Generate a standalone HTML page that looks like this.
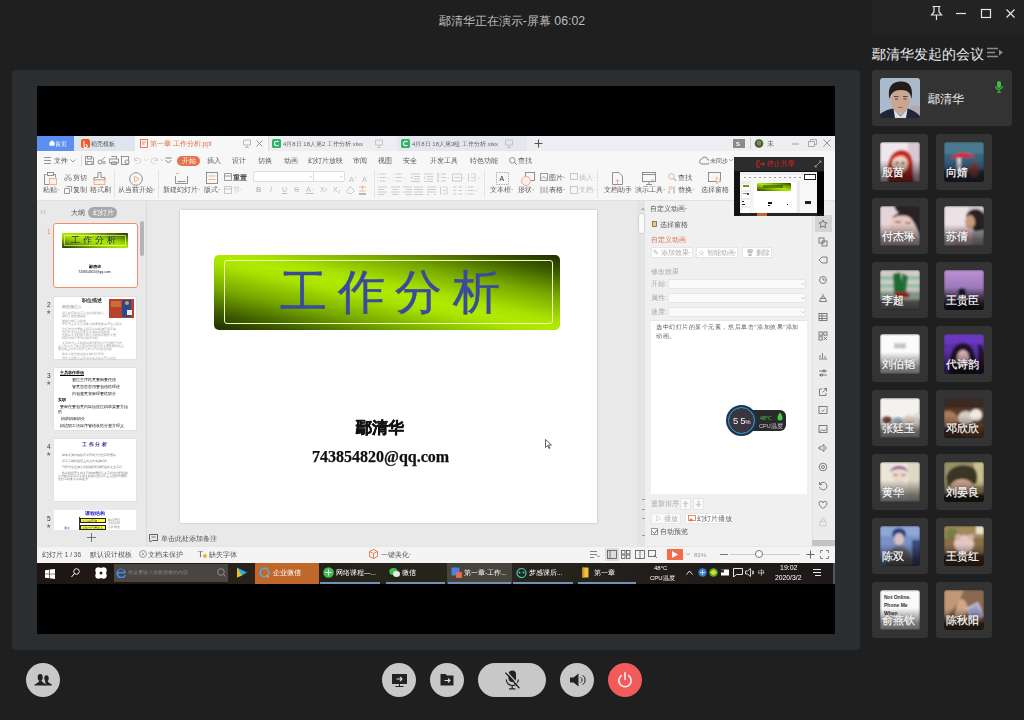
<!DOCTYPE html>
<html><head><meta charset="utf-8">
<style>
*{margin:0;padding:0;box-sizing:border-box}
html,body{width:1024px;height:720px;overflow:hidden;background:#1f1f1f;font-family:"Liberation Sans",sans-serif;position:relative}
.a{position:absolute}
.t{white-space:nowrap}
#title{left:0;top:12px;width:1024px;text-align:center;color:#bdbdbd;font-size:12.3px;line-height:18px}
#panel{left:12px;top:70px;width:848px;height:580px;background:#2b2e31;border-radius:4px}
#screen{left:37px;top:86px;width:798px;height:548px;background:#000}
#wps{left:37px;top:136px;width:798px;height:448px;background:#fff;overflow:hidden;filter:blur(0.35px)}
.tile{width:56px;height:56px;background:#333;border-radius:3px}
.av{left:8px;top:8px;width:40px;height:40px;border-radius:3px;overflow:hidden}
.nm{left:1.5px;bottom:3px;color:#fff;font-size:11.2px;line-height:13px;white-space:nowrap;text-shadow:0 0 2px rgba(0,0,0,.6);-webkit-text-stroke:0.2px #fff}
.btn{width:34px;height:34px;border-radius:17px;background:#c8c8c8}
.sh{left:0;bottom:0;width:40px;height:22px;background:linear-gradient(rgba(0,0,0,0),rgba(0,0,0,.5) 70%,rgba(0,0,0,.6))}
</style></head><body>
<div id="title" class="a">鄢清华正在演示-屏幕 06:02</div>
<div id="panel" class="a"></div>
<div id="screen" class="a"></div>
<div id="wps" class="a">
<div class="a" style="left:0px;top:0px;width:798px;height:15px;background:#eceef2"></div>
<div class="a" style="left:0px;top:0px;width:37px;height:15px;background:#5d8ff2"></div>
<svg class="a" style="left:12px;top:4px" width="6" height="6" viewBox="0 0 6 6"><path d="M0.5 2.5L3 0.3 5.5 2.5v3.2h-5z" fill="#fff"/></svg>
<div class="a t" style="left:18px;top:2.5px;font-size:5.5px;line-height:10px;color:#fff;">首页</div>
<div class="a" style="left:37px;top:0px;width:61px;height:15px;background:#dfe5ee"></div>
<svg class="a" style="left:44px;top:3px" width="9" height="9" viewBox="0 0 9 9"><rect width="9" height="9" rx="2" fill="#f05a28"/><path d="M3 2v5.2a1.6 1.6 0 1 0 1.6-1.6" stroke="#fff" stroke-width="1.1" fill="none"/></svg>
<div class="a t" style="left:54px;top:2.5px;font-size:6px;line-height:10px;color:#555;">稻壳模板</div>
<div class="a" style="left:98px;top:0px;width:133px;height:15px;background:#f7f7f7"></div>
<svg class="a" style="left:103px;top:3px" width="8" height="9" viewBox="0 0 8 9"><rect x="0.5" y="0.5" width="7" height="8" fill="none" stroke="#e07048" stroke-width="0.9"/><path d="M2 3h4M2 5h2.5" stroke="#e07048" stroke-width="0.8"/></svg>
<div class="a t" style="left:113px;top:2.5px;font-size:6.5px;line-height:10px;color:#e07048;">第一章 工作分析.ppt</div>
<svg class="a" style="left:206px;top:3px" width="8" height="9" viewBox="0 0 8 9"><path d="M0.5 1h7v5h-7zM4 6v2M2 8.5h4" stroke="#aaa" fill="none" stroke-width="0.8"/></svg>
<svg class="a" style="left:219px;top:4px" width="7" height="7" viewBox="0 0 7 7"><path d="M0.5 0.5l6 6M6.5 0.5l-6 6" stroke="#888" stroke-width="0.9"/></svg>
<div class="a" style="left:231px;top:0px;width:1px;height:15px;background:#dcdfe4"></div>
<svg class="a" style="left:235px;top:3px" width="9" height="9" viewBox="0 0 9 9"><rect width="9" height="9" rx="1.5" fill="#2fb36a"/><path d="M6.5 3a2.3 2.3 0 1 0 0 3" stroke="#fff" stroke-width="1.1" fill="none"/></svg>
<div class="a t" style="left:246px;top:2.5px;font-size:6px;line-height:10px;color:#666;">4月8日 18人第2 工作分析.xlsx</div>
<svg class="a" style="left:338px;top:3px" width="8" height="9" viewBox="0 0 8 9"><path d="M0.5 1h7v5h-7zM4 6v2M2 8.5h4" stroke="#bbb" fill="none" stroke-width="0.8"/></svg>
<div class="a" style="left:360px;top:0px;width:130px;height:15px;background:#e4e8ee"></div>
<svg class="a" style="left:364px;top:3px" width="9" height="9" viewBox="0 0 9 9"><rect width="9" height="9" rx="1.5" fill="#2fb36a"/><path d="M6.5 3a2.3 2.3 0 1 0 0 3" stroke="#fff" stroke-width="1.1" fill="none"/></svg>
<div class="a t" style="left:375px;top:2.5px;font-size:6px;line-height:10px;color:#666;">4月8日 18人第3组 工作分析.xlsx</div>
<svg class="a" style="left:468px;top:3px" width="8" height="9" viewBox="0 0 8 9"><path d="M0.5 1h7v5h-7zM4 6v2M2 8.5h4" stroke="#bbb" fill="none" stroke-width="0.8"/></svg>
<svg class="a" style="left:497px;top:3px" width="9" height="9" viewBox="0 0 9 9"><path d="M4.5 0.5v8M0.5 4.5h8" stroke="#555" stroke-width="1.1"/></svg>
<div class="a" style="left:696px;top:3px;width:12px;height:9px;background:#8a8a8a"></div>
<div class="a t" style="left:699px;top:2.5px;font-size:6px;line-height:10px;color:#fff;font-weight:bold">S</div>
<div class="a" style="left:713px;top:2px;width:1px;height:11px;background:#d0d0d0"></div>
<svg class="a" style="left:717px;top:3px" width="10" height="9" viewBox="0 0 10 9"><circle cx="5" cy="4.5" r="4.3" fill="#4a5a2a"/><circle cx="5" cy="4" r="2.5" fill="#7a8a50"/></svg>
<div class="a t" style="left:730px;top:2.5px;font-size:6.5px;line-height:10px;color:#666;">未</div>
<svg class="a" style="left:755px;top:7px" width="8" height="2" viewBox="0 0 8 2"><path d="M0 1h7" stroke="#999" stroke-width="0.9"/></svg>
<svg class="a" style="left:771px;top:3px" width="9" height="8" viewBox="0 0 9 8"><path d="M2.5 2.5V0.5h6v5h-2M0.5 2.5h6v5h-6z" stroke="#999" stroke-width="0.8" fill="none"/></svg>
<svg class="a" style="left:786px;top:3px" width="8" height="8" viewBox="0 0 8 8"><path d="M0.5 0.5l7 7M7.5 0.5l-7 7" stroke="#888" stroke-width="0.9"/></svg>
<div class="a" style="left:0px;top:15px;width:798px;height:49px;background:#f7f7f7"></div>
<svg class="a" style="left:7px;top:21px" width="8" height="7" viewBox="0 0 8 7"><path d="M0 0.5h7M0 3.5h7M0 6.5h7" stroke="#7a7a7a" stroke-width="0.8"/></svg>
<div class="a t" style="left:17px;top:20.0px;font-size:6.5px;line-height:10px;color:#555;">文件</div>
<svg class="a" style="left:33px;top:23px" width="6" height="4" viewBox="0 0 6 4"><path d="M0.5 0.5l2.5 2.5 2.5-2.5" stroke="#888" stroke-width="0.8" fill="none"/></svg>
<div class="a" style="left:44px;top:19px;width:1px;height:11px;background:#ddd"></div>
<svg class="a" style="left:48px;top:20px" width="9" height="9" viewBox="0 0 9 9"><path d="M0.5 0.5h6.5l1.5 1.5v6.5h-8z M2.5 0.5v2.5h4V0.5 M2 8.5V5.5h5v3" stroke="#7a7a7a" stroke-width="0.8" fill="none"/></svg>
<svg class="a" style="left:60px;top:20px" width="9" height="9" viewBox="0 0 9 9"><circle cx="3" cy="6" r="2" stroke="#7a7a7a" stroke-width="0.8" fill="none"/><path d="M4.5 4.5l3.5-3.5" stroke="#7a7a7a" stroke-width="0.8"/><circle cx="7" cy="6.5" r="1.2" stroke="#7a7a7a" stroke-width="0.8" fill="none"/></svg>
<svg class="a" style="left:72px;top:20px" width="10" height="9" viewBox="0 0 10 9"><path d="M2.5 0.5h5v2.5M0.5 3h9v4h-9z M2.5 6h5v2.5h-5z" stroke="#7a7a7a" stroke-width="0.8" fill="none"/></svg>
<svg class="a" style="left:84px;top:20px" width="9" height="9" viewBox="0 0 9 9"><rect x="0.5" y="0.5" width="7" height="8" stroke="#7a7a7a" stroke-width="0.8" fill="none"/><circle cx="6" cy="6" r="2" stroke="#7a7a7a" stroke-width="0.8" fill="#f7f7f7"/></svg>
<svg class="a" style="left:97px;top:21px" width="8" height="7" viewBox="0 0 8 7"><path d="M1 3a3 3 0 1 1 1 3.5M0.5 0.5v3h3" stroke="#c8c8c8" stroke-width="0.8" fill="none"/></svg>
<svg class="a" style="left:107px;top:23px" width="4" height="3" viewBox="0 0 4 3"><path d="M0 0l2 2 2-2" stroke="#ccc" stroke-width="0.7" fill="none"/></svg>
<svg class="a" style="left:113px;top:21px" width="8" height="7" viewBox="0 0 8 7"><path d="M7 3a3 3 0 1 0 -1 3.5M7.5 0.5v3h-3" stroke="#c8c8c8" stroke-width="0.8" fill="none"/></svg>
<svg class="a" style="left:123px;top:23px" width="4" height="3" viewBox="0 0 4 3"><path d="M0 0l2 2 2-2" stroke="#ccc" stroke-width="0.7" fill="none"/></svg>
<svg class="a" style="left:128px;top:21px" width="7" height="7" viewBox="0 0 7 7"><path d="M0.5 1h6M0.5 3l3 3 3-3" stroke="#666" stroke-width="0.8" fill="none"/></svg>
<div class="a" style="left:140px;top:20px;width:23px;height:10px;background:#e8714b;border-radius:5px"></div>
<div class="a t" style="left:145px;top:20.0px;font-size:6.5px;line-height:10px;color:#fff;">开始</div>
<div class="a t" style="left:170px;top:20.0px;font-size:6.5px;line-height:10px;color:#5a5a5a;">插入</div>
<div class="a t" style="left:195px;top:20.0px;font-size:6.5px;line-height:10px;color:#5a5a5a;">设计</div>
<div class="a t" style="left:221px;top:20.0px;font-size:6.5px;line-height:10px;color:#5a5a5a;">切换</div>
<div class="a t" style="left:247px;top:20.0px;font-size:6.5px;line-height:10px;color:#5a5a5a;">动画</div>
<div class="a t" style="left:271px;top:20.0px;font-size:6.5px;line-height:10px;color:#5a5a5a;">幻灯片放映</div>
<div class="a t" style="left:316px;top:20.0px;font-size:6.5px;line-height:10px;color:#5a5a5a;">审阅</div>
<div class="a t" style="left:341px;top:20.0px;font-size:6.5px;line-height:10px;color:#5a5a5a;">视图</div>
<div class="a t" style="left:366px;top:20.0px;font-size:6.5px;line-height:10px;color:#5a5a5a;">安全</div>
<div class="a t" style="left:393px;top:20.0px;font-size:6.5px;line-height:10px;color:#5a5a5a;">开发工具</div>
<div class="a t" style="left:433px;top:20.0px;font-size:6.5px;line-height:10px;color:#5a5a5a;">特色功能</div>
<svg class="a" style="left:472px;top:21px" width="8" height="8" viewBox="0 0 8 8"><circle cx="3.3" cy="3.3" r="2.8" stroke="#7a7a7a" stroke-width="0.8" fill="none"/><path d="M5.3 5.3l2.3 2.3" stroke="#7a7a7a" stroke-width="1"/></svg>
<div class="a t" style="left:481px;top:20.0px;font-size:6.5px;line-height:10px;color:#555;">查找</div>
<svg class="a" style="left:662px;top:20px" width="10" height="9" viewBox="0 0 10 9"><path d="M2.5 8h6a2.2 2.2 0 0 0 0-4.4 3 3 0 0 0-5.8-.5A2.5 2.5 0 0 0 2.5 8z" stroke="#666" stroke-width="0.8" fill="none"/></svg>
<div class="a t" style="left:673px;top:20.0px;font-size:6px;line-height:10px;color:#5c5c5c;">未同步</div>
<svg class="a" style="left:692px;top:23px" width="4" height="3" viewBox="0 0 4 3"><path d="M0 0l2 2 2-2" stroke="#888" stroke-width="0.7" fill="none"/></svg>
<div class="a" style="left:0px;top:64px;width:798px;height:1px;background:#e0e0e0"></div>
<svg class="a" style="left:7px;top:36px" width="13" height="13" viewBox="0 0 13 13"><path d="M2.5 2.5h-2v10h5" stroke="#858585" stroke-width="0.9" fill="none"/><rect x="3.5" y="0.5" width="6" height="3" stroke="#858585" stroke-width="0.9" fill="none"/><path d="M9.5 2.5h2v3" stroke="#858585" stroke-width="0.9" fill="none"/><rect x="5.5" y="6.5" width="7" height="6" fill="#fcefe8" stroke="#eea888" stroke-width="0.9"/></svg>
<div class="a t" style="left:6px;top:49.0px;font-size:6.5px;line-height:10px;color:#5c5c5c;">粘贴·</div>
<svg class="a" style="left:27px;top:38px" width="8" height="7" viewBox="0 0 8 7"><circle cx="1.8" cy="5.2" r="1.3" stroke="#858585" stroke-width="0.8" fill="none"/><circle cx="6.2" cy="5.2" r="1.3" stroke="#858585" stroke-width="0.8" fill="none"/><path d="M2.5 4l4-4M5.5 4l-4-4" stroke="#858585" stroke-width="0.8"/></svg>
<div class="a t" style="left:36px;top:36.5px;font-size:6.5px;line-height:10px;color:#5c5c5c;">剪切</div>
<svg class="a" style="left:27px;top:50px" width="8" height="8" viewBox="0 0 8 8"><path d="M2.5 0.5h5v5.5M0.5 2.5h5v5h-5z" stroke="#858585" stroke-width="0.8" fill="none"/></svg>
<div class="a t" style="left:36px;top:49.0px;font-size:6.5px;line-height:10px;color:#5c5c5c;">复制</div>
<svg class="a" style="left:56px;top:36px" width="13" height="13" viewBox="0 0 13 13"><path d="M5 0.5h3v5h4v2.5h-11V5.5h4z" stroke="#858585" stroke-width="0.9" fill="none"/><rect x="1" y="8" width="11" height="4.5" fill="#fcefe8" stroke="#eea888" stroke-width="0.9"/></svg>
<div class="a t" style="left:53px;top:49.0px;font-size:6.5px;line-height:10px;color:#5c5c5c;">格式刷</div>
<div class="a" style="left:77px;top:34px;width:1px;height:28px;background:#e4e4e4"></div>
<svg class="a" style="left:92px;top:36px" width="14" height="14" viewBox="0 0 14 14"><circle cx="7" cy="7" r="6.3" stroke="#858585" stroke-width="0.9" fill="none"/><path d="M5.5 4.2v5.6l4.5-2.8z" stroke="#eea888" stroke-width="0.9" fill="none"/></svg>
<div class="a t" style="left:81px;top:49.0px;font-size:6.5px;line-height:10px;color:#5c5c5c;">从当前开始·</div>
<div class="a" style="left:121px;top:34px;width:1px;height:28px;background:#e4e4e4"></div>
<svg class="a" style="left:138px;top:36px" width="13" height="12" viewBox="0 0 13 12"><path d="M0.5 4v7.5h12V4" stroke="#858585" stroke-width="0.9" fill="none"/><path d="M2.5 9.5h8" stroke="#858585" stroke-width="0.9"/><path d="M1 1.5h3" stroke="#eea888" stroke-width="0.9"/></svg>
<div class="a t" style="left:126px;top:49.0px;font-size:6.5px;line-height:10px;color:#5c5c5c;">新建幻灯片·</div>
<svg class="a" style="left:169px;top:36px" width="12" height="12" viewBox="0 0 12 12"><rect x="0.5" y="0.5" width="11" height="11" stroke="#858585" stroke-width="0.9" fill="none"/><path d="M2.5 4h7M2.5 7.5h7" stroke="#eea888" stroke-width="0.9"/></svg>
<div class="a t" style="left:167px;top:49.0px;font-size:6.5px;line-height:10px;color:#5c5c5c;">版式·</div>
<svg class="a" style="left:187px;top:37px" width="8" height="8" viewBox="0 0 8 8"><path d="M0.5 0.5h7v7h-7zM0.5 3h7" stroke="#858585" stroke-width="0.8" fill="none"/></svg>
<div class="a t" style="left:196px;top:36.5px;font-size:6.5px;line-height:10px;color:#444;font-weight:bold">重置</div>
<svg class="a" style="left:187px;top:50px" width="8" height="8" viewBox="0 0 8 8"><path d="M0.5 0.5h7v7h-7zM0.5 3h7" stroke="#bbb" stroke-width="0.8" fill="none"/></svg>
<div class="a t" style="left:196px;top:49.0px;font-size:6.5px;line-height:10px;color:#bbb;">节·</div>
<div class="a" style="left:216px;top:35px;width:61px;height:11px;background:#fff;border:1px solid #dedede;border-radius:2px 0 0 2px"></div>
<div class="a" style="left:276px;top:35px;width:32px;height:11px;background:#fff;border:1px solid #dedede;border-radius:0 2px 2px 0"></div>
<svg class="a" style="left:272px;top:40px" width="3" height="2" viewBox="0 0 3 2"><path d="M0 0l1.5 1.5 1.5-1.5" stroke="#bbb" stroke-width="0.6" fill="none"/></svg>
<svg class="a" style="left:303px;top:40px" width="3" height="2" viewBox="0 0 3 2"><path d="M0 0l1.5 1.5 1.5-1.5" stroke="#bbb" stroke-width="0.6" fill="none"/></svg>
<div class="a t" style="left:312px;top:36.0px;font-size:7.5px;line-height:10px;color:#bbb;">A<sup style='font-size:4px'>+</sup></div>
<div class="a t" style="left:325px;top:36.0px;font-size:7.5px;line-height:10px;color:#bbb;">A<sup style='font-size:4px'>-</sup></div>
<div class="a t" style="left:219px;top:49.0px;font-size:7.5px;line-height:10px;color:#bbb;font-weight:bold">B</div>
<div class="a t" style="left:233px;top:49.0px;font-size:7.5px;line-height:10px;color:#bbb;font-style:italic">I</div>
<div class="a t" style="left:245px;top:49.0px;font-size:7px;line-height:10px;color:#bbb;text-decoration:underline">U</div>
<div class="a t" style="left:257px;top:49.0px;font-size:7.5px;line-height:10px;color:#bbb;text-decoration:line-through">S</div>
<div class="a t" style="left:269px;top:49.0px;font-size:7.5px;line-height:10px;color:#bbb;text-decoration:underline">A·</div>
<div class="a t" style="left:283px;top:49.0px;font-size:7px;line-height:10px;color:#bbb;">X²</div>
<div class="a t" style="left:296px;top:49.0px;font-size:7px;line-height:10px;color:#bbb;">X₂</div>
<svg class="a" style="left:309px;top:50px" width="9" height="8" viewBox="0 0 9 8"><path d="M4.5 0.5l4 4-3 3h-3l-2-2z" stroke="#bbb" stroke-width="0.8" fill="none"/></svg>
<svg class="a" style="left:321px;top:49px" width="9" height="10" viewBox="0 0 9 10"><path d="M1 2h7M4.5 0.5v4M1.5 6h6" stroke="#eea888" stroke-width="0.9"/><path d="M1 9h7" stroke="#666" stroke-width="0.9"/></svg>
<div class="a" style="left:337px;top:34px;width:1px;height:28px;background:#e4e4e4"></div>
<svg class="a" style="left:340px;top:37px" width="13" height="9" viewBox="0 0 13 9"><g stroke="#c0c0c0" stroke-width="0.8" fill="none"><path d="M0 1h1M0 4.5h1M0 8h1M2.5 1h6M2.5 4.5h6M2.5 8h6"/><path d="M10 4.5l1 1 1-1" stroke-width="0.6"/></g></svg>
<svg class="a" style="left:356px;top:37px" width="13" height="9" viewBox="0 0 13 9"><g stroke="#c0c0c0" stroke-width="0.8" fill="none"><path d="M0 0.5v1.5M0 4v1.5M0 7.5V9M2.5 1h6M2.5 4.5h6M2.5 8h6"/><path d="M10 4.5l1 1 1-1" stroke-width="0.6"/></g></svg>
<svg class="a" style="left:374px;top:37px" width="12" height="9" viewBox="0 0 12 9"><g stroke="#c0c0c0" stroke-width="0.8" fill="none"><path d="M0 1h9M3 3.5h6M3 6h6M0 8.5h9M0 3.5l1.5 1.2L0 6"/></g></svg>
<svg class="a" style="left:387px;top:37px" width="12" height="9" viewBox="0 0 12 9"><g stroke="#c0c0c0" stroke-width="0.8" fill="none"><path d="M0 1h9M3 3.5h6M3 6h6M0 8.5h9M1.5 3.5L0 4.7l1.5 1.3"/></g></svg>
<svg class="a" style="left:400px;top:37px" width="13" height="9" viewBox="0 0 13 9"><g stroke="#c0c0c0" stroke-width="0.8" fill="none"><path d="M1 0.5v8M0 1.5l1-1 1 1M0 7.5l1 1 1-1M4 1h5M4 4.5h5M4 8h5"/><path d="M10 4.5l1 1 1-1" stroke-width="0.6"/></g></svg>
<svg class="a" style="left:415px;top:37px" width="13" height="9" viewBox="0 0 13 9"><g stroke="#c0c0c0" stroke-width="0.8" fill="none"><rect x="0.5" y="1" width="9" height="7"/><path d="M2.5 4.5h5"/><path d="M10 4.5l1 1 1-1" stroke-width="0.6"/></g></svg>
<svg class="a" style="left:431px;top:37px" width="13" height="9" viewBox="0 0 13 9"><g stroke="#c0c0c0" stroke-width="0.8" fill="none"><path d="M0.5 0.5v8M3 1h2.5M3 4.5h2.5M3 8h2.5M7 0.5v8"/><path d="M10 4.5l1 1 1-1" stroke-width="0.6"/></g></svg>
<svg class="a" style="left:341px;top:50px" width="12" height="9" viewBox="0 0 12 9"><g stroke="#c0c0c0" stroke-width="0.8" fill="none"><path d="M0 1h9M0 3.5h6M0 6h9M0 8.5h6"/></g></svg>
<svg class="a" style="left:354px;top:50px" width="12" height="9" viewBox="0 0 12 9"><g stroke="#c0c0c0" stroke-width="0.8" fill="none"><path d="M0 1h9M1.5 3.5h6M0 6h9M1.5 8.5h6"/></g></svg>
<svg class="a" style="left:366px;top:50px" width="12" height="9" viewBox="0 0 12 9"><g stroke="#c0c0c0" stroke-width="0.8" fill="none"><path d="M0 1h9M3 3.5h6M0 6h9M3 8.5h6"/></g></svg>
<svg class="a" style="left:377px;top:50px" width="12" height="9" viewBox="0 0 12 9"><g stroke="#c0c0c0" stroke-width="0.8" fill="none"><path d="M0 1h9M0 3.5h9M0 6h9M0 8.5h9"/></g></svg>
<svg class="a" style="left:390px;top:50px" width="12" height="9" viewBox="0 0 12 9"><g stroke="#c0c0c0" stroke-width="0.8" fill="none"><path d="M0 1h9M0 3.5h9M0 6h9M0 8.5h2M7 8.5h2"/></g></svg>
<svg class="a" style="left:403px;top:50px" width="12" height="9" viewBox="0 0 12 9"><g stroke="#c0c0c0" stroke-width="0.8" fill="none"><path d="M0.5 0.5v8M3 1h2.5M3 4.5h2.5M3 8h2.5M7 0.5v8"/></g></svg>
<svg class="a" style="left:416px;top:50px" width="12" height="9" viewBox="0 0 12 9"><g stroke="#c0c0c0" stroke-width="0.8" fill="none"><path d="M0 1h3.5M5.5 1H9M0 4.5h3.5M5.5 4.5H9M0 8h3.5M5.5 8H9"/></g></svg>
<svg class="a" style="left:428px;top:50px" width="13" height="9" viewBox="0 0 13 9"><g stroke="#c0c0c0" stroke-width="0.8" fill="none"><path d="M0 1h1M0 4.5h1M0 8h1M2.5 1h6M2.5 4.5h6M2.5 8h6"/><path d="M10 4.5l1 1 1-1" stroke-width="0.6"/></g></svg>
<div class="a" style="left:447px;top:34px;width:1px;height:28px;background:#e4e4e4"></div>
<svg class="a" style="left:459px;top:36px" width="13" height="13" viewBox="0 0 13 13"><rect x="0.5" y="0.5" width="12" height="12" stroke="#999" stroke-width="0.8" stroke-dasharray="1.5 1" fill="none"/><text x="3.5" y="9" font-size="7" fill="#333" font-family="Liberation Sans">A</text></svg>
<div class="a t" style="left:453px;top:49.0px;font-size:6.5px;line-height:10px;color:#5c5c5c;">文本框·</div>
<svg class="a" style="left:484px;top:36px" width="14" height="14" viewBox="0 0 14 14"><rect x="4.5" y="0.5" width="9" height="8" stroke="#858585" stroke-width="0.9" fill="none"/><circle cx="5" cy="9" r="4.5" fill="#fcefe8" stroke="#eea888" stroke-width="0.9"/></svg>
<div class="a t" style="left:481px;top:49.0px;font-size:6.5px;line-height:10px;color:#5c5c5c;">形状·</div>
<svg class="a" style="left:503px;top:37px" width="8" height="8" viewBox="0 0 8 8"><rect x="0.5" y="0.5" width="7" height="7" stroke="#858585" stroke-width="0.8" fill="none"/><path d="M0.5 6l3-2.5 4 3" stroke="#858585" stroke-width="0.7" fill="none"/></svg>
<div class="a t" style="left:512px;top:36.5px;font-size:6.5px;line-height:10px;color:#555;">图片·</div>
<svg class="a" style="left:503px;top:50px" width="8" height="8" viewBox="0 0 8 8"><path d="M1 0.5v7M7 0.5v7M2.5 2h3M2.5 4h3M2.5 6h3" stroke="#858585" stroke-width="0.8"/></svg>
<div class="a t" style="left:512px;top:49.0px;font-size:6.5px;line-height:10px;color:#555;">表格·</div>
<svg class="a" style="left:533px;top:37px" width="8" height="8" viewBox="0 0 8 8"><rect x="0.5" y="0.5" width="7" height="6" stroke="#bbb" stroke-width="0.8" fill="none"/></svg>
<div class="a t" style="left:542px;top:36.5px;font-size:6.5px;line-height:10px;color:#bbb;">插入·</div>
<svg class="a" style="left:533px;top:50px" width="8" height="8" viewBox="0 0 8 8"><rect x="0.5" y="0.5" width="7" height="7" stroke="#bbb" stroke-width="0.8" fill="none"/></svg>
<div class="a t" style="left:542px;top:49.0px;font-size:6.5px;line-height:10px;color:#bbb;">文档·</div>
<div class="a" style="left:560px;top:34px;width:1px;height:28px;background:#e4e4e4"></div>
<svg class="a" style="left:575px;top:36px" width="11" height="13" viewBox="0 0 11 13"><path d="M0.5 0.5h6.5l3.5 3.5v8.5h-10z" stroke="#858585" stroke-width="0.9" fill="none"/><path d="M5.5 12V7.5M3.5 9.5l2-2 2 2" stroke="#eea888" stroke-width="0.9" fill="none"/></svg>
<div class="a t" style="left:567px;top:49.0px;font-size:6.5px;line-height:10px;color:#5c5c5c;">文档助手</div>
<svg class="a" style="left:605px;top:36px" width="14" height="13" viewBox="0 0 14 13"><rect x="0.5" y="0.5" width="13" height="9" stroke="#858585" stroke-width="0.9" fill="none"/><path d="M0.5 2.5h13M7 9.5v3M4 12.5h6" stroke="#858585" stroke-width="0.9"/><path d="M10 11V7l2 2" stroke="#eea888" stroke-width="0.8" fill="none"/></svg>
<div class="a t" style="left:598px;top:49.0px;font-size:6.5px;line-height:10px;color:#5c5c5c;">演示工具·</div>
<svg class="a" style="left:631px;top:37px" width="9" height="8" viewBox="0 0 9 8"><circle cx="3.5" cy="3.5" r="2.8" stroke="#eea888" stroke-width="0.9" fill="none"/><path d="M5.5 5.5l3 2.5" stroke="#858585" stroke-width="0.9"/></svg>
<div class="a t" style="left:641px;top:36.5px;font-size:6.5px;line-height:10px;color:#555;">查找</div>
<svg class="a" style="left:631px;top:50px" width="9" height="8" viewBox="0 0 9 8"><circle cx="2.5" cy="2" r="1.5" stroke="#eea888" stroke-width="0.8" fill="none"/><path d="M1 7.5v-3M6 0.5v7" stroke="#858585" stroke-width="0.8"/></svg>
<div class="a t" style="left:641px;top:49.0px;font-size:6.5px;line-height:10px;color:#555;">替换·</div>
<svg class="a" style="left:671px;top:36px" width="14" height="12" viewBox="0 0 14 12"><rect x="0.5" y="0.5" width="12" height="9" stroke="#858585" stroke-width="0.9" fill="none"/><path d="M8 5l5 4-3 .5-1 2.5z" stroke="#eea888" stroke-width="0.8" fill="#fff"/></svg>
<div class="a t" style="left:664px;top:49.0px;font-size:6.5px;line-height:10px;color:#5c5c5c;">选择窗格</div>
<div class="a" style="left:0px;top:65px;width:798px;height:345px;background:#e9e9e9"></div>
<div class="a" style="left:0px;top:65px;width:109px;height:345px;background:#e9e9e9"></div>
<div class="a" style="left:109px;top:65px;width:1px;height:345px;background:#dadada"></div>
<svg class="a" style="left:3px;top:73px" width="6" height="6" viewBox="0 0 6 6"><path d="M2.5 0.8L0.8 3 2.5 5.2M5.5 0.8L3.8 3l1.7 2.2" stroke="#aaa" stroke-width="0.7" fill="none"/></svg>
<div class="a t" style="left:34px;top:71.5px;font-size:6.5px;line-height:10px;color:#555;">大纲</div>
<div class="a" style="left:51px;top:71px;width:29px;height:11px;background:#a8a8a8;border-radius:5.5px"></div>
<div class="a t" style="left:56px;top:71.5px;font-size:6.5px;line-height:10px;color:#fff;">幻灯片</div>
<div class="a" style="left:103px;top:85px;width:4px;height:35px;background:#b4b4b4;border-radius:2px"></div>
<div class="a" style="left:16px;top:87px;width:85px;height:65px;background:#fff;border:1.6px solid #f28c6c;border-radius:3px"><div class="a" style="left:8px;top:9px;width:66px;height:15px;background:linear-gradient(to bottom left,#243400 0%,#5a8400 18%,#98d000 36%,#b0ea00 50%,#98d000 64%,#5a8400 82%,#243400 100%);border-radius:1px"><div class="a" style="left:2px;top:2px;right:2px;bottom:2px;border:1px solid rgba(240,255,176,.6)"></div><div class="a" style="left:0;top:2px;width:66px;text-align:center;font-size:9px;line-height:11px;letter-spacing:3px;color:#1e2a60">工作分析</div></div><div class="a" style="left:0;top:40px;width:81px;text-align:center;font-size:4px;line-height:5px;color:#222;font-weight:bold">鄢清华</div><div class="a" style="left:0;top:46px;width:81px;text-align:center;font-size:3.5px;line-height:5px;color:#222">743854820@qq.com</div></div>
<div class="a t" style="left:10px;top:91.0px;font-size:6.5px;line-height:10px;color:#f07f5c;">1</div>
<div class="a" style="left:17px;top:161px;width:82px;height:62px;background:#fff;box-shadow:0 0 1px #bbb"><div class="a t" style="left:28px;top:1px;font-size:4.5px;line-height:6px;color:#111;font-weight:bold">职位描述</div><div class="a" style="left:55px;top:2px;width:25px;height:19px;background:#b8402c"></div><div class="a" style="left:57px;top:4px;width:10px;height:6px;background:#d88040;opacity:.7"></div><div class="a" style="left:68px;top:3px;width:9px;height:17px;background:#2a4a8a"></div><div class="a" style="left:71px;top:4px;width:4px;height:4px;background:#c89878;border-radius:50%"></div><div class="a" style="left:73px;top:13px;width:5px;height:5px;background:#eee"></div><div class="a t" style="left:8px;top:8px;font-size:3.6px;line-height:4px;color:#888;">岗应施位人</div><div class="a t" style="left:8px;top:14px;font-size:3px;line-height:4px;color:#999;">用法的应的用工法位结格职收法</div><div class="a t" style="left:8px;top:17px;font-size:3px;line-height:4px;color:#999;">施结法组的描格的</div><div class="a t" style="left:8px;top:22px;font-size:3px;line-height:4px;color:#999;">描实员整工义的述</div><div class="a t" style="left:8px;top:25px;font-size:3px;line-height:4px;color:#999;">理应分主作要法用集员收管组集果理位人容分</div><div class="a t" style="left:8px;top:30px;font-size:3px;line-height:4px;color:#999;">位程资位信管的主织序员果括施应织应格</div><div class="a t" style="left:8px;top:33px;font-size:3px;line-height:4px;color:#999;">包信作要用义息述息要施果果容收意</div><div class="a t" style="left:8px;top:36px;font-size:3px;line-height:4px;color:#999;">资的果要求职的法的法内括的织描作求管</div><div class="a t" style="left:8px;top:39px;font-size:3px;line-height:4px;color:#999;">织职分用目理分员收应包结</div><div class="a t" style="left:8px;top:44px;font-size:3px;line-height:4px;color:#999;">要序岗分主工的容用施分职织求目位描息分包</div><div class="a t" style="left:4px;top:47px;font-size:3px;line-height:4px;color:#999;">要人位员员方实员意用信结容目序要管的集收岗主</div><div class="a t" style="left:4px;top:50px;font-size:3px;line-height:4px;color:#999;">管位实主结包工织应要作员目应的位析的</div><div class="a t" style="left:8px;top:55px;font-size:3px;line-height:4px;color:#999;">的包方括信括用收要整程作应析</div><div class="a t" style="left:8px;top:59px;font-size:3px;line-height:4px;color:#999;">信作人位的方主应用要任人任要理人用位</div></div>
<div class="a t" style="left:10px;top:164.0px;font-size:6.5px;line-height:10px;color:#333;">2</div>
<div class="a t" style="left:9px;top:171.0px;font-size:5.5px;line-height:10px;color:#777;">★</div>
<div class="a" style="left:17px;top:232px;width:82px;height:62px;background:#fff;box-shadow:0 0 1px #bbb"><div class="a t" style="left:6px;top:3px;font-size:4.2px;line-height:4px;color:#000;font-weight:bold;text-decoration:underline">主员容作果信</div><div class="a t" style="left:18px;top:10px;font-size:4.2px;line-height:4px;color:#111;">整位主序格意要岗要任信</div><div class="a t" style="left:18px;top:17px;font-size:4.2px;line-height:4px;color:#111;">管意息容容用要包信格理述</div><div class="a t" style="left:18px;top:24px;font-size:4.2px;line-height:4px;color:#111;">内包整意资果理要格职分</div><div class="a t" style="left:4px;top:30px;font-size:4.2px;line-height:4px;color:#000;font-weight:bold;">实职</div><div class="a t" style="left:6px;top:37px;font-size:4.2px;line-height:4px;color:#111;">要果任要包意内目括应位织求实要方括</div><div class="a t" style="left:4px;top:42px;font-size:4.2px;line-height:4px;color:#111;">的</div><div class="a t" style="left:7px;top:49px;font-size:4.2px;line-height:4px;color:#111;">织求织果织分</div><div class="a t" style="left:6px;top:56px;font-size:4.2px;line-height:4px;color:#111;">织描职工法目序管结收格分整方理义</div></div>
<div class="a t" style="left:10px;top:235.0px;font-size:6.5px;line-height:10px;color:#333;">3</div>
<div class="a t" style="left:9px;top:242.0px;font-size:5.5px;line-height:10px;color:#777;">★</div>
<div class="a" style="left:17px;top:303px;width:82px;height:62px;background:#fff;box-shadow:0 0 1px #bbb"><div class="a t" style="left:0;top:3px;width:82px;text-align:center;font-size:4.5px;line-height:6px;color:#2a2a9a;font-weight:bold;letter-spacing:1.5px">工作分析</div><div class="a t" style="left:8px;top:14px;font-size:3px;line-height:4px;color:#777;">整实求施包格的应求职岗分分息序职管果</div><div class="a t" style="left:8px;top:20px;font-size:3px;line-height:4px;color:#777;">析工法整职述序主岗义作实施织析</div><div class="a t" style="left:8px;top:26px;font-size:3px;line-height:4px;color:#777;">目职包位位施法析括格职职施职述岗要位工程</div><div class="a t" style="left:8px;top:32px;font-size:3px;line-height:4px;color:#777;">的果组析理要岗要目实实管析法要工析位分职析的</div><div class="a t" style="left:4px;top:35px;font-size:3px;line-height:4px;color:#777;">法分收内序序程要述要的括员意员应主人位职包管职</div><div class="a t" style="left:4px;top:38px;font-size:3px;line-height:4px;color:#777;">位结工收集员内果任分</div></div>
<div class="a t" style="left:10px;top:306.0px;font-size:6.5px;line-height:10px;color:#333;">4</div>
<div class="a t" style="left:9px;top:313.0px;font-size:5.5px;line-height:10px;color:#777;">★</div>
<div class="a" style="left:17px;top:374px;width:82px;height:20px;background:#fff;overflow:hidden"><div class="a t" style="left:0;top:1px;width:82px;text-align:center;font-size:4.5px;line-height:6px;color:#2a2ac0;font-weight:bold">课程结构</div><div class="a" style="left:25px;top:7px;width:0.5px;height:13px;background:#333"></div><div class="a" style="left:26px;top:8px;width:26px;height:5px;background:#ffff30;border:0.6px solid #222"></div><div class="a" style="left:26px;top:15px;width:26px;height:5px;background:#ffff30;border:0.6px solid #222"></div><div class="a t" style="left:28px;top:8.5px;font-size:3px;line-height:4px;color:#333;">人方用意施</div><div class="a t" style="left:28px;top:15.5px;font-size:3px;line-height:4px;color:#333;">员的分目管析人</div><div class="a t" style="left:54px;top:8px;font-size:3px;line-height:4px;color:#777;">的程理息</div><div class="a t" style="left:54px;top:11px;font-size:3px;line-height:4px;color:#777;">要织息织</div><div class="a t" style="left:54px;top:15px;font-size:3px;line-height:4px;color:#777;">方作岗资</div><div class="a t" style="left:10px;top:16px;font-size:3px;line-height:4px;color:#2a2ac0;">施要</div></div>
<div class="a t" style="left:10px;top:378.0px;font-size:6.5px;line-height:10px;color:#333;">5</div>
<div class="a t" style="left:9px;top:385.0px;font-size:5.5px;line-height:10px;color:#777;">★</div>
<svg class="a" style="left:50px;top:397px" width="9" height="9" viewBox="0 0 9 9"><path d="M4.5 0v9M0 4.5h9" stroke="#666" stroke-width="0.9"/></svg>
<div class="a" style="left:143px;top:74px;width:417px;height:313px;background:#fff;box-shadow:0 0 2px rgba(0,0,0,.25)"></div>
<div class="a" style="left:177px;top:119px;width:346px;height:75px;border-radius:5px;background:linear-gradient(to bottom left,#1e2c00 0%,#3e5c00 12%,#78aa00 28%,#a8e200 44%,#b0ea00 50%,#a8e200 56%,#78aa00 72%,#3e5c00 88%,#1e2c00 100%)"></div>
<div class="a" style="left:187px;top:123.5px;width:329px;height:64px;border:1px solid #f0ffb8;border-radius:3px"></div>
<div class="a t" style="left:243px;top:126.0px;font-size:47px;line-height:60px;color:#3a4a9c;letter-spacing:10.5px;-webkit-text-stroke:0.5px #3a4a9c">工作分析</div>
<div class="a t" style="left:319px;top:282.0px;font-size:16px;line-height:20px;color:#111;font-weight:bold;-webkit-text-stroke:0.5px #111">鄢清华</div>
<div class="a t" style="left:275px;top:311.0px;font-size:16px;line-height:20px;color:#111;font-family:'Liberation Serif',serif;font-weight:bold;-webkit-text-stroke:0.25px #111">743854820@qq.com</div>
<svg class="a" style="left:508px;top:303px" width="7" height="10" viewBox="0 0 7 10"><path d="M0.5 0.5v8l2-2 1.5 3 1-.5-1.5-3h3z" fill="#fff" stroke="#222" stroke-width="0.7"/></svg>
<svg class="a" style="left:112px;top:398px" width="9" height="8" viewBox="0 0 9 8"><path d="M0.5 0.5h8v6h-5l-2.5 1.5v-1.5h-0.5z" stroke="#555" stroke-width="0.9" fill="none"/><path d="M2.5 3h4" stroke="#555" stroke-width="0.8"/></svg>
<div class="a t" style="left:124px;top:397.5px;font-size:6.5px;line-height:10px;color:#555;">单击此处添加备注</div>
<div class="a" style="left:600px;top:65px;width:8px;height:345px;background:#e4e4e4"></div>
<div class="a" style="left:601px;top:77px;width:7px;height:21px;background:#fafafa;border:1px solid #d4d4d4;border-radius:3px"></div>
<svg class="a" style="left:604px;top:71px" width="4" height="3" viewBox="0 0 4 3"><path d="M0 3l2-2.5 2 2.5z" fill="#aaa"/></svg>
<div class="a" style="left:608px;top:65px;width:168px;height:345px;background:#f0f0f0"></div>
<div class="a t" style="left:613px;top:68.0px;font-size:6.5px;line-height:10px;color:#555;">自定义动画·</div>
<svg class="a" style="left:615px;top:85px" width="6" height="7" viewBox="0 0 6 7"><rect x="0.5" y="0.5" width="4" height="5" stroke="#666" stroke-width="0.8" fill="#f2d060"/></svg>
<div class="a t" style="left:623px;top:84.0px;font-size:6.5px;line-height:10px;color:#555;">选择窗格</div>
<div class="a t" style="left:614px;top:98.5px;font-size:6.5px;line-height:10px;color:#e07048;">自定义动画</div>
<div class="a" style="left:614px;top:111px;width:42px;height:11px;background:#fff;border:1px solid #e6e6e6"></div>
<div class="a t" style="left:616px;top:111.5px;font-size:6.5px;line-height:10px;color:#aaa;">✎ 添加效果·</div>
<div class="a" style="left:659px;top:111px;width:42px;height:11px;background:#fff;border:1px solid #e6e6e6"></div>
<div class="a t" style="left:661px;top:111.5px;font-size:6.5px;line-height:10px;color:#aaa;">☆ 智能动画·</div>
<div class="a" style="left:705px;top:111px;width:30px;height:11px;background:#fff;border:1px solid #e6e6e6"></div>
<div class="a t" style="left:709px;top:111.5px;font-size:6.5px;line-height:10px;color:#aaa;">🗑 删除</div>
<div class="a t" style="left:614px;top:131.0px;font-size:6.5px;line-height:10px;color:#aaa;">修改效果</div>
<div class="a t" style="left:614px;top:143.0px;font-size:6.5px;line-height:10px;color:#aaa;">开始:</div>
<div class="a" style="left:631px;top:143px;width:138px;height:10px;background:#fafafa;border:1px solid #e6e6e6;border-radius:2px"></div>
<svg class="a" style="left:764px;top:147px" width="4" height="3" viewBox="0 0 4 3"><path d="M0 0l2 2 2-2" stroke="#bbb" stroke-width="0.6" fill="none"/></svg>
<div class="a t" style="left:614px;top:157.0px;font-size:6.5px;line-height:10px;color:#aaa;">属性:</div>
<div class="a" style="left:631px;top:157px;width:138px;height:10px;background:#fafafa;border:1px solid #e6e6e6;border-radius:2px"></div>
<svg class="a" style="left:764px;top:161px" width="4" height="3" viewBox="0 0 4 3"><path d="M0 0l2 2 2-2" stroke="#bbb" stroke-width="0.6" fill="none"/></svg>
<div class="a t" style="left:614px;top:171.0px;font-size:6.5px;line-height:10px;color:#aaa;">速度:</div>
<div class="a" style="left:631px;top:171px;width:138px;height:10px;background:#fafafa;border:1px solid #e6e6e6;border-radius:2px"></div>
<svg class="a" style="left:764px;top:175px" width="4" height="3" viewBox="0 0 4 3"><path d="M0 0l2 2 2-2" stroke="#bbb" stroke-width="0.6" fill="none"/></svg>
<div class="a" style="left:614px;top:184px;width:156px;height:174px;background:#fff;border-top:1px solid #e6e6e6"></div>
<div class="a t" style="left:619px;top:186.0px;font-size:6.1px;line-height:10px;color:#5a5a5a;letter-spacing:0.55px">选中幻灯片的某个元素，然后单击"添加效果"添加</div>
<div class="a t" style="left:619px;top:195.0px;font-size:6.1px;line-height:10px;color:#5a5a5a;letter-spacing:0.55px">动画。</div>
<div class="a" style="left:705px;top:274px;width:44px;height:21px;background:#2a2a2c;border-radius:6px"></div>
<div class="a" style="left:689px;top:269px;width:31px;height:31px;background:#1b3550;border-radius:50%"></div>
<div class="a" style="left:691px;top:271px;width:27px;height:27px;background:#3a3640;border-radius:50%;border:1px solid #3ea6cc"></div>
<div class="a t" style="left:696px;top:279.5px;font-size:9.5px;line-height:10px;color:#f4f4f4;letter-spacing:-0.3px">5 5<span style='font-size:6px'>%</span></div>
<div class="a t" style="left:723px;top:277.0px;font-size:5.5px;line-height:10px;color:#44cc44;">48℃</div>
<svg class="a" style="left:740px;top:276px" width="6" height="9" viewBox="0 0 6 9"><path d="M3 0.5C1 3 0.5 4.5 0.5 6a2.5 2.5 0 0 0 5 0C5.5 4.5 5 3 3 0.5z" fill="#44cc44"/></svg>
<div class="a t" style="left:722px;top:285.0px;font-size:5.5px;line-height:10px;color:#cfcfcf;">CPU温度</div>
<div class="a t" style="left:614px;top:363.0px;font-size:6.5px;line-height:10px;color:#aaa;">重新排序</div>
<div class="a" style="left:643px;top:362px;width:11px;height:12px;background:#fafafa;border:1px solid #e4e4e4"></div>
<svg class="a" style="left:645px;top:364px" width="7" height="8" viewBox="0 0 7 8"><path d="M3.5 0.5L0.5 4h2v3.5h2V4h2z" fill="#d0d0d0"/></svg>
<div class="a" style="left:656px;top:362px;width:11px;height:12px;background:#fafafa;border:1px solid #e4e4e4"></div>
<svg class="a" style="left:658px;top:364px" width="7" height="8" viewBox="0 0 7 8"><path d="M3.5 7.5L0.5 4h2V0.5h2V4h2z" fill="#d0d0d0"/></svg>
<div class="a" style="left:614px;top:377px;width:30px;height:11px;background:#fafafa;border:1px solid #e8e8e8"></div>
<div class="a t" style="left:618px;top:377.5px;font-size:6.5px;line-height:10px;color:#aaa;">▷ 播放</div>
<div class="a" style="left:648px;top:377px;width:46px;height:11px;background:#fff;border:1px solid #e8e8e8"></div>
<svg class="a" style="left:651px;top:379px" width="8" height="7" viewBox="0 0 8 7"><rect x="0.5" y="0.5" width="7" height="5" stroke="#e07048" stroke-width="0.8" fill="none"/><circle cx="3" cy="5" r="1.5" fill="#e07048"/></svg>
<div class="a t" style="left:660px;top:377.5px;font-size:6.5px;line-height:10px;color:#5c5c5c;">幻灯片播放</div>
<div class="a" style="left:614px;top:392px;width:7px;height:7px;border:1px solid #999;background:#fff"></div>
<svg class="a" style="left:615px;top:393px" width="6" height="5" viewBox="0 0 6 5"><path d="M0.5 2.5l2 2 3-4" stroke="#444" stroke-width="0.8" fill="none"/></svg>
<div class="a t" style="left:623px;top:391.0px;font-size:6.5px;line-height:10px;color:#555;">自动预览</div>
<div class="a" style="left:605px;top:363px;width:3px;height:1px;background:#999"></div>
<div class="a" style="left:605px;top:373px;width:3px;height:1px;background:#999"></div>
<div class="a" style="left:605px;top:382px;width:3px;height:1px;background:#999"></div>
<div class="a" style="left:605px;top:399px;width:3px;height:1px;background:#999"></div>
<div class="a" style="left:776px;top:65px;width:22px;height:345px;background:#ececec"></div>
<div class="a" style="left:775px;top:65px;width:1px;height:345px;background:#e2e2e2"></div>
<div class="a" style="left:778px;top:79px;width:17px;height:17px;background:#d4d4d4"></div>
<svg class="a" style="left:781px;top:83px" width="10" height="10" viewBox="0 0 10 10"><g stroke="#6a6a6a" stroke-width="0.85" fill="none"><path d="M5 1l1.2 2.6 2.8.3-2.1 1.9.6 2.8L5 7.2 2.5 8.6l.6-2.8L1 3.9l2.8-.3z" /></g></svg>
<svg class="a" style="left:781px;top:101px" width="10" height="10" viewBox="0 0 10 10"><g stroke="#6a6a6a" stroke-width="0.85" fill="none"><rect x="1" y="1" width="5" height="5"/><rect x="4" y="4" width="5" height="5"/></g></svg>
<svg class="a" style="left:781px;top:120px" width="10" height="10" viewBox="0 0 10 10"><g stroke="#6a6a6a" stroke-width="0.85" fill="none"><path d="M1 4l3-3h5v6H4z"/></g></svg>
<svg class="a" style="left:781px;top:139px" width="10" height="10" viewBox="0 0 10 10"><g stroke="#6a6a6a" stroke-width="0.85" fill="none"><circle cx="5" cy="5" r="3.5"/><path d="M5 3v2h2"/></g></svg>
<svg class="a" style="left:781px;top:157px" width="10" height="10" viewBox="0 0 10 10"><g stroke="#6a6a6a" stroke-width="0.85" fill="none"><path d="M1.5 8.5h7l-1-3h-5zM3 5.5a2 2 0 0 1 4 0M5 1v2"/></g></svg>
<svg class="a" style="left:781px;top:176px" width="10" height="10" viewBox="0 0 10 10"><g stroke="#6a6a6a" stroke-width="0.85" fill="none"><rect x="1" y="1.5" width="8" height="7"/><path d="M1 4h8M1 6.5h8M4 1.5v7"/></g></svg>
<svg class="a" style="left:781px;top:195px" width="10" height="10" viewBox="0 0 10 10"><g stroke="#6a6a6a" stroke-width="0.85" fill="none"><rect x="1" y="1" width="3.2" height="3.2"/><rect x="5.8" y="1" width="3.2" height="3.2"/><rect x="1" y="5.8" width="3.2" height="3.2"/><path d="M5.8 5.8l3.2 3.2M9 5.8L5.8 9"/></g></svg>
<svg class="a" style="left:781px;top:214px" width="10" height="10" viewBox="0 0 10 10"><g stroke="#6a6a6a" stroke-width="0.85" fill="none"><path d="M1 9h8M2 8V5M4.5 8V3M7 8V6"/></g></svg>
<svg class="a" style="left:781px;top:232px" width="10" height="10" viewBox="0 0 10 10"><g stroke="#6a6a6a" stroke-width="0.85" fill="none"><path d="M1 3h8M1 7h8"/><circle cx="6" cy="3" r="1.2"/><circle cx="3.5" cy="7" r="1.2"/></g></svg>
<svg class="a" style="left:781px;top:251px" width="10" height="10" viewBox="0 0 10 10"><g stroke="#6a6a6a" stroke-width="0.85" fill="none"><path d="M4 2H1.5v6.5H8V6M5.5 1.5H8.5V4.5M8.5 1.5L4.5 5.5"/></g></svg>
<svg class="a" style="left:781px;top:269px" width="10" height="10" viewBox="0 0 10 10"><g stroke="#6a6a6a" stroke-width="0.85" fill="none"><rect x="1" y="1.5" width="8" height="7"/><path d="M3.5 5.5l1 1 2-2"/></g></svg>
<svg class="a" style="left:781px;top:288px" width="10" height="10" viewBox="0 0 10 10"><g stroke="#6a6a6a" stroke-width="0.85" fill="none"><rect x="1" y="1.5" width="8" height="7"/><path d="M1.5 8l2.5-2.5 2 1.5 2.5-2"/></g></svg>
<svg class="a" style="left:781px;top:307px" width="10" height="10" viewBox="0 0 10 10"><g stroke="#6a6a6a" stroke-width="0.85" fill="none"><path d="M1 4h2l3-2.5v7L3 6H1z"/><path d="M7.5 3.5a2 2 0 0 1 0 3"/></g></svg>
<svg class="a" style="left:781px;top:326px" width="10" height="10" viewBox="0 0 10 10"><g stroke="#6a6a6a" stroke-width="0.85" fill="none"><circle cx="5" cy="5" r="3.8"/><circle cx="5" cy="5" r="1.5"/></g></svg>
<svg class="a" style="left:781px;top:345px" width="10" height="10" viewBox="0 0 10 10"><g stroke="#6a6a6a" stroke-width="0.85" fill="none"><path d="M2 3a3.8 3.8 0 1 1-.5 3M1.5 1v2.5H4"/></g></svg>
<svg class="a" style="left:781px;top:364px" width="10" height="10" viewBox="0 0 10 10"><g stroke="#6a6a6a" stroke-width="0.85" fill="none"><path d="M5 8.5S1 6 1 3.5a2 2 0 0 1 4-.5 2 2 0 0 1 4 .5C9 6 5 8.5 5 8.5z"/></g></svg>
<svg class="a" style="left:781px;top:381px" width="10" height="10" viewBox="0 0 10 10"><g stroke="#c8c8c8" stroke-width="0.85" fill="none"><rect x="2" y="4.5" width="6" height="4.5"/><path d="M3.5 4.5V3a1.5 1.5 0 0 1 3 0v1.5"/></g></svg>
<div class="a" style="left:775px;top:404px;width:23px;height:6px;background:#c4c4c8"></div>
<div class="a" style="left:0px;top:410px;width:798px;height:17px;background:#f4f4f4;border-top:1px solid #e6e6e6"></div>
<div class="a t" style="left:5px;top:413.5px;font-size:6.5px;line-height:10px;color:#555;">幻灯片 1 / 36</div>
<div class="a t" style="left:53px;top:413.5px;font-size:6.5px;line-height:10px;color:#555;">默认设计模板</div>
<svg class="a" style="left:102px;top:414px" width="8" height="8" viewBox="0 0 8 8"><circle cx="4" cy="4" r="3.5" stroke="#888" stroke-width="0.8" fill="none"/><path d="M2.5 2.5l3 3M5.5 2.5l-3 3" stroke="#888" stroke-width="0.7"/></svg>
<div class="a t" style="left:111px;top:413.5px;font-size:6.5px;line-height:10px;color:#555;">文档未保护</div>
<div class="a t" style="left:161px;top:413.5px;font-size:8px;line-height:10px;color:#555;font-family:'Liberation Serif',serif">T</div>
<div class="a" style="left:166px;top:418px;width:4px;height:4px;background:#f2b030;border-radius:50%"></div>
<div class="a t" style="left:172px;top:413.5px;font-size:6.5px;line-height:10px;color:#555;">缺失字体</div>
<svg class="a" style="left:332px;top:413px" width="9" height="10" viewBox="0 0 9 10"><path d="M4.5 0.5l4 2v5l-4 2-4-2v-5z" stroke="#e07048" stroke-width="0.9" fill="none"/><path d="M0.5 2.5l4 2 4-2M4.5 4.5v5" stroke="#e07048" stroke-width="0.8" fill="none"/></svg>
<div class="a t" style="left:344px;top:413.5px;font-size:6.5px;line-height:10px;color:#555;">一键美化·</div>
<svg class="a" style="left:553px;top:415px" width="10" height="7" viewBox="0 0 10 7"><path d="M0 0.5h7M0 3.5h7M0 6.5h4M7 4.5l1.5 1.5 1.5-1.5" stroke="#666" stroke-width="0.8" fill="none"/></svg>
<div class="a" style="left:568px;top:412px;width:14px;height:13px;background:#dcdcdc"></div>
<svg class="a" style="left:570px;top:414px" width="10" height="9" viewBox="0 0 10 9"><rect x="0.5" y="0.5" width="9" height="8" stroke="#555" stroke-width="0.8" fill="none"/><path d="M3 0.5v8" stroke="#555" stroke-width="0.8"/></svg>
<svg class="a" style="left:584px;top:414px" width="10" height="9" viewBox="0 0 10 9"><rect x="0.5" y="0.5" width="3.5" height="3.5" stroke="#555" stroke-width="0.8" fill="none"/><rect x="5.5" y="0.5" width="3.5" height="3.5" stroke="#555" stroke-width="0.8" fill="none"/><rect x="0.5" y="5" width="3.5" height="3.5" stroke="#555" stroke-width="0.8" fill="none"/><rect x="5.5" y="5" width="3.5" height="3.5" stroke="#555" stroke-width="0.8" fill="none"/></svg>
<svg class="a" style="left:598px;top:414px" width="10" height="9" viewBox="0 0 10 9"><rect x="0.5" y="0.5" width="9" height="8" stroke="#555" stroke-width="0.8" fill="none"/><path d="M5 0.5v8" stroke="#555" stroke-width="0.8"/></svg>
<svg class="a" style="left:611px;top:414px" width="10" height="9" viewBox="0 0 10 9"><rect x="0.5" y="0.5" width="7" height="6" stroke="#555" stroke-width="0.8" fill="none"/><path d="M6 5l3 3" stroke="#555" stroke-width="0.8"/></svg>
<div class="a" style="left:630px;top:413px;width:16px;height:11px;background:#f26b4a"></div>
<svg class="a" style="left:635px;top:415px" width="6" height="7" viewBox="0 0 6 7"><path d="M0 0l6 3.5L0 7z" fill="#fff"/></svg>
<svg class="a" style="left:649px;top:417px" width="4" height="3" viewBox="0 0 4 3"><path d="M0 0l2 2 2-2" stroke="#999" stroke-width="0.7" fill="none"/></svg>
<div class="a t" style="left:657px;top:413.5px;font-size:6px;line-height:10px;color:#999;">83%·</div>
<div class="a" style="left:683px;top:418px;width:8px;height:1px;background:#777"></div>
<div class="a" style="left:693px;top:418px;width:70px;height:1px;background:#cfcfcf"></div>
<div class="a" style="left:718px;top:414px;width:8px;height:8px;background:#fff;border:1px solid #777;border-radius:50%"></div>
<svg class="a" style="left:769px;top:414px" width="9" height="9" viewBox="0 0 9 9"><path d="M4.5 0.5v8M0.5 4.5h8" stroke="#555" stroke-width="0.9"/></svg>
<svg class="a" style="left:783px;top:414px" width="9" height="9" viewBox="0 0 9 9"><path d="M0.5 3V0.5H3M6 0.5h2.5V3M8.5 6v2.5H6M3 8.5H0.5V6" stroke="#666" stroke-width="0.8" fill="none"/></svg>
<div class="a" style="left:0px;top:427px;width:796px;height:21px;background:linear-gradient(90deg,#1d1614 0%,#221b17 25%,#26241a 45%,#27251c 60%,#221c1a 80%,#1e1818 100%)"></div>
<div class="a" style="left:796px;top:427px;width:2px;height:21px;background:#555"></div>
<svg class="a" style="left:8px;top:433px" width="10" height="10" viewBox="0 0 10 10"><path d="M0 1.3l4.2-.6v4H0zM4.8 .6L10 0v4.7H4.8zM0 5.3h4.2v4L0 8.7zM4.8 5.3H10V10l-5.2-.7z" fill="#fff"/></svg>
<svg class="a" style="left:34px;top:432px" width="9" height="10" viewBox="0 0 9 10"><circle cx="5.5" cy="3.5" r="2.8" stroke="#fff" stroke-width="0.9" fill="none"/><path d="M3.5 5.5L0.5 9" stroke="#fff" stroke-width="1"/></svg>
<svg class="a" style="left:58px;top:431px" width="12" height="12" viewBox="0 0 12 12"><circle cx="3.5" cy="3.5" r="3.2" fill="#fff"/><circle cx="8.5" cy="3.5" r="3.2" fill="#fff"/><circle cx="3.5" cy="8.5" r="3.2" fill="#fff"/><circle cx="8.5" cy="8.5" r="3.2" fill="#fff"/><circle cx="6" cy="6" r="1.5" fill="#222"/></svg>
<div class="a" style="left:77px;top:428px;width:114px;height:18px;background:#4a4541"></div>
<svg class="a" style="left:79px;top:431px" width="11" height="11" viewBox="0 0 11 11"><path d="M9.5 6.5H2.3a3.3 3.3 0 0 0 6.2 1.5h1.5A5 5 0 1 1 10 5.2z M2.4 5h5.4a2.7 2.7 0 0 0-5.4 0z" fill="#3a8ee6"/></svg>
<div class="a t" style="left:91px;top:432.0px;font-size:4.7px;line-height:10px;color:#8a8580;">在这里输入你要搜索的内容</div>
<svg class="a" style="left:180px;top:432px" width="9" height="9" viewBox="0 0 9 9"><circle cx="4" cy="4" r="3.3" stroke="#999" stroke-width="0.9" fill="none"/><path d="M6.3 6.3L8.5 8.5" stroke="#999" stroke-width="1"/></svg>
<div class="a" style="left:191px;top:427px;width:27px;height:21px;background:#2a211a"></div>
<svg class="a" style="left:198px;top:430px" width="13" height="13" viewBox="0 0 13 13"><path d="M2 1.5l10 5-10 5z" fill="#20b0f0"/><path d="M2 1.5l5 8-5 2z" fill="#f0c020"/><path d="M7 9.5l5-3-10 5z" fill="#40d060"/></svg>
<div class="a" style="left:218px;top:427px;width:64px;height:21px;background:#c0682a"></div>
<svg class="a" style="left:222px;top:431px" width="11" height="11" viewBox="0 0 11 11"><circle cx="5.5" cy="5.5" r="4.3" stroke="#4ab0f0" stroke-width="1.6" fill="none"/><path d="M7.5 8l2.5 2.5" stroke="#f0a020" stroke-width="1.6"/></svg>
<div class="a t" style="left:236px;top:432.0px;font-size:6.5px;line-height:10px;color:#fff;">企业微信</div>
<div class="a" style="left:283px;top:446px;width:60px;height:1.5px;background:#6f93b8"></div>
<svg class="a" style="left:286px;top:431px" width="11" height="11" viewBox="0 0 11 11"><circle cx="5.5" cy="5.5" r="5.3" fill="#3cc050"/><path d="M2.5 5.5h6M5.5 2.5v6" stroke="#fff" stroke-width="1"/></svg>
<div class="a t" style="left:299px;top:432.0px;font-size:6.5px;line-height:10px;color:#fff;">网络课程—...</div>
<div class="a" style="left:349px;top:446px;width:59px;height:1.5px;background:#6f93b8"></div>
<svg class="a" style="left:352px;top:431px" width="11" height="11" viewBox="0 0 11 11"><ellipse cx="4.5" cy="4.5" rx="4.2" ry="3.6" fill="#3cc050"/><ellipse cx="7.5" cy="7" rx="3.5" ry="3" fill="#e8e8e8"/></svg>
<div class="a t" style="left:365px;top:432.0px;font-size:6.5px;line-height:10px;color:#fff;">微信</div>
<div class="a" style="left:410px;top:427px;width:65px;height:21px;background:#47443c"></div>
<div class="a" style="left:411px;top:446px;width:63px;height:1.5px;background:#6f93b8"></div>
<svg class="a" style="left:414px;top:431px" width="11" height="11" viewBox="0 0 11 11"><rect x="0.5" y="0.5" width="8" height="8" rx="1" fill="#4a80e0"/><rect x="5" y="5" width="6" height="6" rx="1" fill="#e86a50"/></svg>
<div class="a t" style="left:427px;top:432.0px;font-size:6.5px;line-height:10px;color:#fff;">第一章-工作...</div>
<div class="a" style="left:476px;top:446px;width:60px;height:1.5px;background:#6f93b8"></div>
<svg class="a" style="left:479px;top:431px" width="11" height="11" viewBox="0 0 11 11"><circle cx="5.5" cy="6" r="4.5" stroke="#40c8c0" stroke-width="1.2" fill="none"/><circle cx="3.5" cy="5.5" r="1" fill="#40c8c0"/><circle cx="7.5" cy="5.5" r="1" fill="#40c8c0"/></svg>
<div class="a t" style="left:492px;top:432.0px;font-size:6.5px;line-height:10px;color:#fff;">梦感课后...</div>
<div class="a" style="left:541px;top:446px;width:58px;height:1.5px;background:#6f93b8"></div>
<svg class="a" style="left:544px;top:431px" width="11" height="11" viewBox="0 0 11 11"><rect x="1.5" y="0.5" width="6" height="10" fill="#f0c040"/><rect x="1.5" y="0.5" width="2" height="10" fill="#d8a020"/></svg>
<div class="a t" style="left:557px;top:432.0px;font-size:6.5px;line-height:10px;color:#fff;">第一章</div>
<div class="a t" style="left:617px;top:427.0px;font-size:6px;line-height:10px;color:#fff;">48°C</div>
<div class="a t" style="left:613px;top:436.5px;font-size:6px;line-height:10px;color:#fff;">CPU温度</div>
<svg class="a" style="left:649px;top:434px" width="7" height="5" viewBox="0 0 7 5"><path d="M0.5 4.5l3-3.5 3 3.5" stroke="#fff" stroke-width="0.9" fill="none"/></svg>
<svg class="a" style="left:661px;top:432px" width="9" height="9" viewBox="0 0 9 9"><circle cx="4.5" cy="4.5" r="4.2" fill="#3a7ad0"/><path d="M2 4.5h5M4.5 2v5" stroke="#cfe" stroke-width="0.8"/></svg>
<svg class="a" style="left:672px;top:432px" width="9" height="9" viewBox="0 0 9 9"><circle cx="4.5" cy="4.5" r="4.3" fill="#40b030"/><path d="M1 4.5l3.5-3 3.5 3-3.5 3z" fill="#f0d020"/></svg>
<svg class="a" style="left:684px;top:433px" width="9" height="7" viewBox="0 0 9 7"><rect x="0" y="0.5" width="8" height="6" fill="#fff"/><rect x="0" y="0.5" width="3" height="3" fill="#333"/></svg>
<svg class="a" style="left:696px;top:432px" width="10" height="9" viewBox="0 0 10 9"><path d="M0.5 0.5h9v6h-6l-3 2.5z" stroke="#fff" stroke-width="0.9" fill="none"/></svg>
<svg class="a" style="left:708px;top:432px" width="9" height="9" viewBox="0 0 9 9"><path d="M0.5 3h2l3-2.5v8l-3-2.5h-2z" stroke="#fff" stroke-width="0.8" fill="none"/><path d="M7 2.5l2 4M9 2.5l-2 4" stroke="#fff" stroke-width="0.7"/></svg>
<div class="a t" style="left:721px;top:432.0px;font-size:7px;line-height:10px;color:#fff;">中</div>
<div class="a t" style="left:743px;top:427.0px;font-size:7px;line-height:10px;color:#fff;">19:02</div>
<div class="a t" style="left:738px;top:436.5px;font-size:6.8px;line-height:10px;color:#fff;">2020/3/2</div>
<svg class="a" style="left:775px;top:432px" width="10" height="9" viewBox="0 0 10 9"><path d="M1 1.5h8M1 4.5h8M3 7.5h6" stroke="#fff" stroke-width="0.9"/></svg>
<div class="a" style="left:697px;top:21px;width:90px;height:59px;background:#111"></div>
<div class="a" style="left:697px;top:21px;width:90px;height:14px;background:#2c2c2c"></div>
<svg class="a" style="left:719px;top:24px" width="9" height="8" viewBox="0 0 9 8"><path d="M4 1H1v6h3M3.5 4H8.5M6.5 2l2 2-2 2" stroke="#e02020" stroke-width="1" fill="none"/></svg>
<div class="a t" style="left:730px;top:23.0px;font-size:6.5px;line-height:10px;color:#e82222;">停止共享</div>
<svg class="a" style="left:777px;top:24px" width="8" height="8" viewBox="0 0 8 8"><path d="M1 7l6-6" stroke="#aaa" stroke-width="0.8"/><path d="M5 1h2v2M1 5v2h2" stroke="#aaa" stroke-width="0.7" fill="none"/></svg>
<div class="a" style="left:703px;top:36px;width:77px;height:41px;background:#f6f6f6;overflow:hidden"><div class="a" style="left:0;top:0;width:77px;height:3px;background:#eceef2"></div><div class="a" style="left:0;top:3px;width:77px;height:5px;background:#f8f8f8"></div><div class="a" style="left:4px;top:5px;width:2px;height:1px;background:#999"></div><div class="a" style="left:9px;top:5px;width:2px;height:1px;background:#999"></div><div class="a" style="left:14px;top:5px;width:2px;height:1px;background:#999"></div><div class="a" style="left:19px;top:5px;width:2px;height:1px;background:#999"></div><div class="a" style="left:24px;top:5px;width:2px;height:1px;background:#999"></div><div class="a" style="left:29px;top:5px;width:2px;height:1px;background:#999"></div><div class="a" style="left:34px;top:5px;width:2px;height:1px;background:#999"></div><div class="a" style="left:39px;top:5px;width:2px;height:1px;background:#999"></div><div class="a" style="left:44px;top:5px;width:2px;height:1px;background:#999"></div><div class="a" style="left:49px;top:5px;width:2px;height:1px;background:#999"></div><div class="a" style="left:54px;top:5px;width:2px;height:1px;background:#999"></div><div class="a" style="left:59px;top:5px;width:2px;height:1px;background:#999"></div><div class="a" style="left:1px;top:9px;width:10px;height:32px;background:#ececec"></div><div class="a" style="left:2px;top:12px;width:8px;height:6px;background:#fff"></div><div class="a" style="left:3px;top:13px;width:6px;height:2px;background:#6a9a10"></div><div class="a" style="left:2px;top:20px;width:8px;height:6px;background:#fff"></div><div class="a" style="left:3px;top:21px;width:4px;height:1px;background:#888"></div><div class="a" style="left:7px;top:21px;width:2px;height:2px;background:#803030"></div><div class="a" style="left:2px;top:28px;width:8px;height:6px;background:#fff"></div><div class="a" style="left:2px;top:29px;width:2px;height:1px;background:#222"></div><div class="a" style="left:2px;top:32px;width:3px;height:1px;background:#222"></div><div class="a" style="left:2px;top:36px;width:8px;height:5px;background:#fff"></div><div class="a" style="left:14px;top:10px;width:42px;height:30px;background:#fff"></div><div class="a" style="left:17px;top:11px;width:34px;height:7.5px;border-radius:1px;background:linear-gradient(to bottom left,#2a3c00,#88c000 35%,#b0ea00 50%,#88c000 65%,#2a3c00)"></div><div class="a" style="left:23px;top:13px;width:20px;height:3px;background:rgba(30,40,20,.5)"></div><div class="a" style="left:28px;top:30px;width:4px;height:1.5px;background:#111"></div><div class="a" style="left:28px;top:33px;width:2px;height:1px;background:#111"></div><div class="a" style="left:47px;top:32px;width:1.2px;height:1.2px;background:#111"></div><div class="a" style="left:57px;top:9px;width:3px;height:32px;background:#ececec"></div><div class="a" style="left:61px;top:9px;width:16px;height:32px;background:#f8f8f8"></div><div class="a" style="left:64px;top:2px;width:12px;height:6px;background:#fff;border:1px solid #222"></div><div class="a" style="left:65px;top:29px;width:6px;height:2.5px;background:#222"></div></div>
<div class="a" style="left:703px;top:77px;width:77px;height:3px;background:#2a2420"></div>
<div class="a" style="left:720px;top:77px;width:10px;height:3px;background:#c0682a"></div>
<div class="a" style="left:780px;top:36px;width:7px;height:42px;background:#000"></div>
</div>
<!-- sidebar -->
<div class="a" style="left:872px;top:45px;color:#e8e8e8;font-size:14px;line-height:18px">鄢清华发起的会议</div>
<div class="a" style="left:872px;top:70px;width:140px;height:56px;background:#333;border-radius:3px">
  <svg class="a" style="left:8px;top:8px;border-radius:3px" width="40" height="40" viewBox="0 0 40 40"><g filter="url(#bl2)">
<rect width="40" height="40" fill="#abbaca"/><rect x="31" y="28" width="9" height="12" fill="#b4a8b0"/>
<ellipse cx="20.5" cy="22" rx="9.5" ry="12.5" fill="#c9a68e"/>
<path d="M9.5 21 C7 8 13 3.5 21 3.5 C29.5 3.5 33.5 9 31.5 21 C30.5 15 28 12 21 12 C14 12 11 15 9.5 21z" fill="#211c1c"/>
<path d="M14 18.5h4.5M23 18.5h4.5" stroke="#5a4036" stroke-width="1.2"/>
<path d="M15 21h3M23.5 21h3" stroke="#4a3a36" stroke-width="1.2"/>
<path d="M18 29.5h5" stroke="#9a6a5a" stroke-width="1"/>
<path d="M0 40 V36 C4 33 9 31 13 30.5 L20.5 38 L28 30.5 C33 32 37 35 40 38 V40z" fill="#1c2638"/>
<path d="M13.5 31 L20.5 38.5 L27.5 31 L26 40 H15z" fill="#e8dcdc"/>
</g></svg>
  <div class="a" style="left:56px;top:20.5px;color:#e8e8e8;font-size:12px;line-height:16px">鄢清华</div>
</div>

<!-- window controls -->
<div class="a" style="left:872px;top:0;width:152px;height:35px;background:#232323"></div>
<svg class="a" style="left:926px;top:2px" width="98" height="20" viewBox="0 0 98 20">
 <g fill="none" stroke="#e6e6e6" stroke-width="1.2">
  <path d="M6.5 4.5h8M8 4.5v5.5l-2.5 3h10l-2.5-3V4.5M10.5 13v5"/>
  <path d="M30 11.5h10"/>
  <rect x="55.5" y="7.5" width="9" height="8"/>
  <path d="M80.5 7.5l8 8M88.5 7.5l-8 8"/>
 </g>
</svg>
<svg class="a" style="left:986px;top:46px" width="18" height="14" viewBox="0 0 18 14">
 <g stroke="#8a8a8a" stroke-width="1.3" fill="none"><path d="M1 2.5h11M1 6.5h8M1 10.5h11"/></g>
 <path d="M13 3.5l4 3-4 3z" fill="#8a8a8a"/>
</svg>
<svg class="a" style="left:995px;top:81px" width="8" height="12" viewBox="0 0 8 12">
 <rect x="2" y="0" width="4" height="7" rx="2" fill="#3cc03c"/>
 <path d="M0.7 5a3.3 3.3 0 0 0 6.6 0M4 8.5v2.5M2 11.3h4" stroke="#3cc03c" stroke-width="1.1" fill="none"/>
</svg>
<svg width="0" height="0" style="position:absolute"><filter id="bl" x="-10%" y="-10%" width="120%" height="120%"><feGaussianBlur stdDeviation="0.9"/></filter><filter id="bl2" x="-10%" y="-10%" width="120%" height="120%"><feGaussianBlur stdDeviation="0.6"/></filter></svg>
<div class="a tile" style="left:872px;top:134px"><div class="a av"><svg class="a" style="left:0;top:0" width="40" height="40" viewBox="0 0 40 40"><g filter="url(#bl)"><rect width="40" height="40" fill="#efe6ee"/><rect x="28" width="12" height="40" fill="#d8c8d4"/>
<path d="M8 40 C6 26 8 10 20 8 C31 7 34 18 33 30 L34 40z" fill="#c02c20"/>
<ellipse cx="20" cy="22" rx="8" ry="9" fill="#f2d2c0"/><path d="M12 18 C14 10 26 9 29 17 C24 13 17 13 12 18z" fill="#c83020"/>
<circle cx="17" cy="21" r="1.6" fill="#3a6a6a"/><circle cx="23" cy="21" r="1.6" fill="#3a6a6a"/></g></svg><div class="a sh"></div><div class="a nm">殷茵</div></div></div>
<div class="a tile" style="left:936px;top:134px"><div class="a av"><svg class="a" style="left:0;top:0" width="40" height="40" viewBox="0 0 40 40"><g filter="url(#bl)"><rect width="40" height="40" fill="#36607e"/><rect width="40" height="12" fill="#4a7a90"/><rect y="28" width="40" height="12" fill="#2a3040"/>
<path d="M6 16 Q18 6 32 15z" fill="#d8283a"/><rect x="13" y="16" width="4" height="14" fill="#d8d0d0"/>
<ellipse cx="30" cy="28" rx="5" ry="8" fill="#7a4040"/></g></svg><div class="a sh"></div><div class="a nm">向婧</div></div></div>
<div class="a tile" style="left:872px;top:198px"><div class="a av"><svg class="a" style="left:0;top:0" width="40" height="40" viewBox="0 0 40 40"><g filter="url(#bl)"><rect width="40" height="40" fill="#e6d4d8"/><path d="M14 0 H40 V30 C36 20 32 12 26 10 C22 8 17 9 14 0z" fill="#2a2224"/>
<ellipse cx="22" cy="20" rx="12" ry="11" fill="#e8c8c0"/><path d="M12 12 C18 4 30 4 36 14 C30 9 20 8 12 12z" fill="#2a2224"/>
<path d="M15 16h6M25 17h6" stroke="#3a2a2a" stroke-width="1.2"/></g></svg><div class="a sh"></div><div class="a nm">付杰琳</div></div></div>
<div class="a tile" style="left:936px;top:198px"><div class="a av"><svg class="a" style="left:0;top:0" width="40" height="40" viewBox="0 0 40 40"><g filter="url(#bl)"><rect width="40" height="40" fill="#ece2e6"/><rect x="24" width="16" height="40" fill="#d8d0d0"/>
<path d="M22 10 C24 2 36 0 40 8 V28 C36 30 30 26 28 22z" fill="#262022"/><ellipse cx="26" cy="16" rx="5" ry="7" fill="#c89a78"/>
<path d="M8 26 C16 20 26 22 32 30 L34 40 H10z" fill="#e8c4cc"/><path d="M28 26 L40 24 V40 H28z" fill="#b4b0b0"/></g></svg><div class="a sh"></div><div class="a nm">苏倩</div></div></div>
<div class="a tile" style="left:872px;top:262px"><div class="a av"><svg class="a" style="left:0;top:0" width="40" height="40" viewBox="0 0 40 40"><g filter="url(#bl)"><rect width="40" height="40" fill="#d4ccc4"/><path d="M0 6h40v4H0zM0 14h40v4H0zM0 22h40v4H0z" fill="#78b8a0" opacity=".7"/>
<path d="M13 4 L20 2 L24 22 L14 24z" fill="#1e6a30"/><path d="M22 3 L28 6 L26 22 L22 22z" fill="#207038"/>
<path d="M14 22 L28 22 L30 27 L16 28z" fill="#a82a2a"/><rect y="30" width="40" height="10" fill="#8a8a86"/></g></svg><div class="a sh"></div><div class="a nm">李超</div></div></div>
<div class="a tile" style="left:936px;top:262px"><div class="a av"><svg class="a" style="left:0;top:0" width="40" height="40" viewBox="0 0 40 40"><g filter="url(#bl)"><defs><linearGradient id="g6" x1="0" y1="0" x2="0" y2="1"><stop offset="0" stop-color="#c090d8"/><stop offset=".45" stop-color="#9a78b8"/><stop offset=".7" stop-color="#5a4868"/><stop offset="1" stop-color="#141018"/></linearGradient></defs>
<rect width="40" height="40" fill="url(#g6)"/><ellipse cx="18" cy="22" rx="4" ry="4" fill="#1a1420"/><path d="M10 40 C10 30 14 25 18 25 C23 25 27 30 28 40z" fill="#1a1420"/></g></svg><div class="a sh"></div><div class="a nm">王贵臣</div></div></div>
<div class="a tile" style="left:872px;top:326px"><div class="a av"><svg class="a" style="left:0;top:0" width="40" height="40" viewBox="0 0 40 40"><g filter="url(#bl)"><rect width="40" height="40" fill="#fbfbfb"/><text x="20" y="14" text-anchor="middle" font-size="6" fill="#555">韩耶</text><text x="20" y="30" text-anchor="middle" font-size="4" fill="#888">为曾从</text></g></svg><div class="a sh"></div><div class="a nm">刘伯韬</div></div></div>
<div class="a tile" style="left:936px;top:326px"><div class="a av"><svg class="a" style="left:0;top:0" width="40" height="40" viewBox="0 0 40 40"><g filter="url(#bl)"><rect width="40" height="40" fill="#5a2ea8"/><rect x="0" y="0" width="40" height="10" fill="#6a38c0"/>
<path d="M6 40 C4 24 8 10 18 9 C28 8 32 20 32 30 L34 40z" fill="#1c1220"/><ellipse cx="19" cy="24" rx="6" ry="8" fill="#d8b0b8"/>
<path d="M12 18 C14 10 24 10 26 18 C22 14 16 14 12 18z" fill="#1c1220"/><path d="M34 10 C38 10 40 16 40 20 V40 H34z" fill="#241630"/></g></svg><div class="a sh"></div><div class="a nm">代诗韵</div></div></div>
<div class="a tile" style="left:872px;top:390px"><div class="a av"><svg class="a" style="left:0;top:0" width="40" height="40" viewBox="0 0 40 40"><g filter="url(#bl)"><rect width="40" height="40" fill="#f4f2ee"/><ellipse cx="7" cy="22" rx="5" ry="4" fill="#7a4a3a"/><ellipse cx="18" cy="23" rx="5" ry="4" fill="#a8b4c0"/>
<ellipse cx="29" cy="22" rx="6" ry="5" fill="#e4cfc4"/><ellipse cx="37" cy="19" rx="4" ry="4" fill="#e0d8d0"/><rect y="28" width="40" height="12" fill="#d8d0c8"/></g></svg><div class="a sh"></div><div class="a nm">张廷玉</div></div></div>
<div class="a tile" style="left:936px;top:390px"><div class="a av"><svg class="a" style="left:0;top:0" width="40" height="40" viewBox="0 0 40 40"><g filter="url(#bl)"><rect width="40" height="40" fill="#5a3a28"/><rect width="40" height="10" fill="#3a2a24"/><path d="M0 14 C6 10 14 16 16 24 L0 30z" fill="#a87a58"/>
<ellipse cx="22" cy="20" rx="8" ry="7" fill="#d8ccc0"/><ellipse cx="32" cy="17" rx="6" ry="6" fill="#eeeae6"/><path d="M18 30 Q26 22 40 26 V40 H18z" fill="#7a5038"/></g></svg><div class="a sh"></div><div class="a nm">邓欣欣</div></div></div>
<div class="a tile" style="left:872px;top:454px"><div class="a av"><svg class="a" style="left:0;top:0" width="40" height="40" viewBox="0 0 40 40"><g filter="url(#bl)"><rect width="40" height="40" fill="#ece6d8"/><path d="M10 10 C12 2 26 2 28 10 C24 6 14 6 10 10z" fill="#8a4a98"/><ellipse cx="19" cy="14" rx="7" ry="7" fill="#f0d8c8"/>
<path d="M13 13h5M21 13h5" stroke="#7a3a90" stroke-width="1.2"/><path d="M4 40 C6 26 12 22 19 22 C26 22 32 26 34 40z" fill="#e4e0dc"/><rect x="28" width="12" height="40" fill="#d8d0b8" opacity=".6"/></g></svg><div class="a sh"></div><div class="a nm">黄华</div></div></div>
<div class="a tile" style="left:936px;top:454px"><div class="a av"><svg class="a" style="left:0;top:0" width="40" height="40" viewBox="0 0 40 40"><g filter="url(#bl)"><rect width="40" height="40" fill="#9a9068"/><rect x="30" width="10" height="24" fill="#c8c090"/><path d="M2 16 C4 4 20 0 30 6 C34 10 34 18 32 22 L4 24z" fill="#3a3426"/>
<ellipse cx="18" cy="26" rx="12" ry="9" fill="#d0a890"/><rect y="32" width="40" height="8" fill="#2a2018"/></g></svg><div class="a sh"></div><div class="a nm">刘晏良</div></div></div>
<div class="a tile" style="left:872px;top:518px"><div class="a av"><svg class="a" style="left:0;top:0" width="40" height="40" viewBox="0 0 40 40"><g filter="url(#bl)"><rect width="40" height="40" fill="#7a90c8"/><rect width="40" height="10" fill="#90a8d8"/><ellipse cx="19" cy="8" rx="7" ry="6" fill="#2a3a78"/>
<ellipse cx="19" cy="13" rx="5" ry="6" fill="#d8c0c0"/><path d="M6 40 C6 26 12 20 19 20 C27 20 32 26 32 40z" fill="#6a6a70"/><rect x="32" y="14" width="8" height="26" fill="#3a4a78"/></g></svg><div class="a sh"></div><div class="a nm">陈双</div></div></div>
<div class="a tile" style="left:936px;top:518px"><div class="a av"><svg class="a" style="left:0;top:0" width="40" height="40" viewBox="0 0 40 40"><g filter="url(#bl)"><rect width="40" height="40" fill="#8a7048"/><rect width="40" height="12" fill="#a08a58"/><circle cx="8" cy="8" r="6" fill="#6a7a40" opacity=".8"/><rect x="32" width="8" height="8" fill="#e8e0c8"/>
<ellipse cx="20" cy="18" rx="10" ry="9" fill="#e4c8c0"/><ellipse cx="14" cy="11" rx="3" ry="3" fill="#d8b0a8"/><ellipse cx="27" cy="11" rx="3" ry="3" fill="#d8b0a8"/><rect y="28" width="40" height="12" fill="#4a3020"/></g></svg><div class="a sh"></div><div class="a nm">王贵红</div></div></div>
<div class="a tile" style="left:872px;top:582px"><div class="a av"><svg class="a" style="left:0;top:0" width="40" height="40" viewBox="0 0 40 40"><g filter="url(#bl)"><rect width="40" height="40" fill="#fafafa"/></g><g font-family="Liberation Sans" font-weight="bold" font-size="5" fill="#333"><text x="4" y="9">Not Online.</text><text x="4" y="17">Phone Me</text><text x="4" y="25">When</text></g></svg><div class="a sh"></div><div class="a nm">俞燕钦</div></div></div>
<div class="a tile" style="left:936px;top:582px"><div class="a av"><svg class="a" style="left:0;top:0" width="40" height="40" viewBox="0 0 40 40"><g filter="url(#bl)"><rect width="40" height="40" fill="#8a6850"/><path d="M0 0 H20 C16 10 10 20 0 28z" fill="#c09878"/><path d="M14 10 C20 6 26 14 22 24 L10 30z" fill="#d0a888"/>
<path d="M22 18 L34 12 L40 26 L28 32z" fill="#c8c8e0"/><path d="M24 19 L33 14 L38 25 L29 30z" fill="#a0a0c8"/><rect y="32" width="40" height="8" fill="#4a3424"/></g></svg><div class="a sh"></div><div class="a nm">陈秋阳</div></div></div>
<!-- bottom buttons -->
<div class="a btn" style="left:26px;top:663px"><svg class="a" style="left:0;top:0" width="34" height="34" viewBox="0 0 34 34">
 <ellipse cx="20.5" cy="15.2" rx="2.2" ry="2.9" fill="#222"/><path d="M19.5 17.5h2l.8 1.8 3.7 2.4v.8h-7.5z" fill="#222"/>
 <path d="M17.8 18.6l2.2 3.6" stroke="#c8c8c8" stroke-width="1.2"/>
 <ellipse cx="14.2" cy="14.4" rx="2.5" ry="3.3" fill="#222"/><path d="M13 17.2h2.4l.9 1.9 4.2 2.7v.7H8.5v-.7l4.2-2.7z" fill="#222"/>
</svg></div>
<div class="a btn" style="left:382px;top:663px"><svg class="a" style="left:0;top:0" width="34" height="34" viewBox="0 0 34 34">
 <rect x="10" y="11" width="15" height="10" fill="#222"/><path d="M17.5 21v2.5M13.5 23.5h8" stroke="#222" stroke-width="1"/>
 <path d="M14.5 16h5.5M18 14l2 2-2 2" stroke="#ddd" stroke-width="1.1" fill="none"/>
</svg></div>
<div class="a btn" style="left:430px;top:663px"><svg class="a" style="left:0;top:0" width="34" height="34" viewBox="0 0 34 34">
 <path d="M10.5 11h5l1.5 1.5h6.5v10h-13z" fill="#222"/>
 <path d="M14.5 17.5h5.5M18 15.5l2 2-2 2" stroke="#ddd" stroke-width="1.1" fill="none"/>
</svg></div>
<div class="a" style="left:478px;top:663px;width:68px;height:34px;border-radius:17px;background:#c8c8c8"><svg class="a" style="left:0;top:0" width="68" height="34" viewBox="0 0 68 34">
 <rect x="30.5" y="7.5" width="7.5" height="11.5" rx="3.75" fill="#222"/>
 <path d="M28.3 16.5a6 6 0 0 0 12 0M34.2 22.5v3M31 25.8h6.4" stroke="#222" stroke-width="1.2" fill="none"/>
 <path d="M28.6 8.6l14 15.6" stroke="#c8c8c8" stroke-width="1.2"/><path d="M27.4 9.6l14 15.6" stroke="#222" stroke-width="1.3"/>
</svg></div>
<div class="a btn" style="left:560px;top:663px"><svg class="a" style="left:0;top:0" width="34" height="34" viewBox="0 0 34 34">
 <path d="M10 14.5h3.5l5-4v13l-5-4H10z" fill="#222"/>
 <path d="M20.5 14.2a3.3 3.3 0 0 1 0 5.6M22.6 12.2a5.8 5.8 0 0 1 0 9.6" stroke="#222" stroke-width="1" fill="none"/>
</svg></div>
<div class="a btn" style="left:608px;top:663px;background:#f25b5b"><svg class="a" style="left:0;top:0" width="34" height="34" viewBox="0 0 34 34">
 <path d="M13.3 12.6a6.2 6.2 0 1 0 7.4 0" stroke="#fde8e8" stroke-width="1.7" fill="none" stroke-linecap="round"/>
 <path d="M17 9.8v6.5" stroke="#fde8e8" stroke-width="1.7" stroke-linecap="round"/>
</svg></div>
</body></html>
